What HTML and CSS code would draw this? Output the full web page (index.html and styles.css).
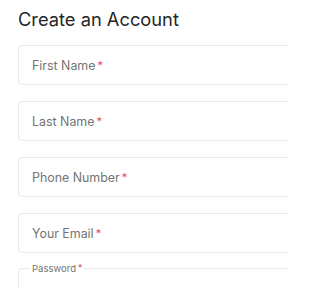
FILE: index.html
```html
<!DOCTYPE html>
<html>
<head>
<meta charset="utf-8">
<link rel="stylesheet" href="styles.css">
</head>
<body>
<div class="page">
  <h1 class="title">Create an Account</h1>
  <form class="form">
    <div class="field"><span class="label">First Name</span><span class="req">*</span></div>
    <div class="field"><span class="label">Last Name</span><span class="req">*</span></div>
    <div class="field"><span class="label">Phone Number</span><span class="req">*</span></div>
    <div class="field"><span class="label">Your Email</span><span class="req">*</span></div>
    <fieldset class="outlined">
      <legend class="legend">Password<span class="req small">*</span></legend>
    </fieldset>
  </form>
</div>
</body>
</html>
```
FILE: styles.css
```css
html, body {
  margin: 0;
  padding: 0;
  background: #ffffff;
  width: 288px;
  height: 288px;
  overflow: hidden;
}
body {
  font-family: Inter, "Noto Sans", "Liberation Sans", sans-serif;
}
.page {
  width: 288px;
  height: 288px;
  overflow: hidden;
  box-sizing: border-box;
  padding: 8px 0 0 18px;
}
.title {
  margin: 0;
  font-size: 18.3px;
  font-weight: 400;
  line-height: 22px;
  color: #262626;
}
.form {
  margin-top: 15px;
  display: flex;
  flex-direction: column;
  gap: 16px;
  width: 300px;
}
.field {
  box-sizing: border-box;
  height: 40px;
  border: 1px solid #e8e8e8;
  border-radius: 4px;
  padding: 0 13px;
  display: flex;
  align-items: center;
  font-size: 12.4px;
  color: #747474;
}
.req {
  color: #e0505f;
  margin-left: 2px;
  font-size: 11px;
  align-self: flex-start;
  margin-top: 12px;
}
.outlined {
  margin: -7px 0 0 0;
  padding: 0 13px;
  border: 1px solid #e8e8e8;
  border-radius: 4px;
  height: 40px;
}
.legend {
  font-size: 9.5px;
  color: #747474;
  padding: 0 2px;
  margin-left: -2px;
  line-height: 12px;
}
.req.small {
  font-size: 8.5px;
  margin-top: 0;
  vertical-align: 1px;
}
```
